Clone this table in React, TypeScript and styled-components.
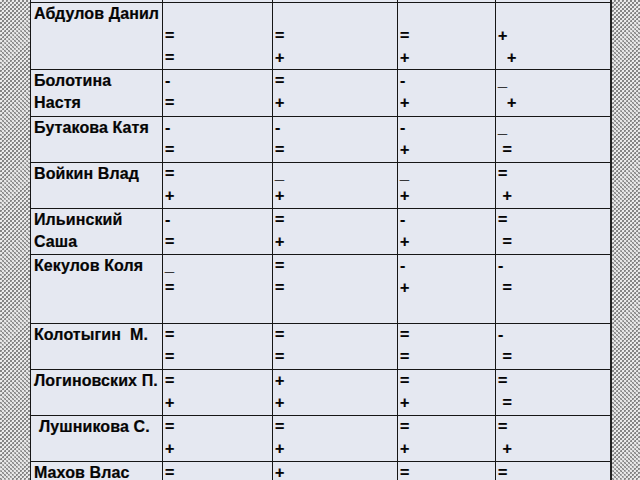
import React from "react";
import styled, { createGlobalStyle } from "styled-components";

const Global = createGlobalStyle`
  html, body { margin: 0; padding: 0; background: #ffffff; }
  body { width: 640px; height: 480px; overflow: hidden; }
`;

const Page = styled.div`
  display: flex;
  width: 640px;
  height: 480px;
  overflow: hidden;
`;

const Hatch = styled.div`
  flex: 0 0 30px;
  height: 100%;
  background-color: #c4c4c4;
  background-image:
    repeating-linear-gradient(135deg, rgba(255,255,255,0.3) 0 1px, transparent 1px 3px),
    repeating-conic-gradient(#858585 0 25%, #e6e6e6 0 50%);
  background-size: auto, 4px 4px;
`;

const Sheet = styled.table`
  flex: 0 0 580px;
  width: 580px;
  table-layout: fixed;
  border-collapse: collapse;
  align-self: flex-start;
  background: #e5e8f1;
  font-family: "Liberation Sans", Arial, sans-serif;
  font-weight: bold;
  font-size: 16px;
  letter-spacing: 0.1px;
  color: #050505;
  -webkit-text-stroke: 0.2px #050505;
`;

const Row = styled.tr<{ $h: number }>`
  height: ${(p) => p.$h}px;
`;

const Cell = styled.td<{ $indent?: number }>`
  border: 1px solid #161616;
  padding: 0 0 0 ${(p) => p.$indent ?? 2}px;
  vertical-align: top;
  overflow: hidden;
  &:last-child { border-right: 2px solid #222; }
`;

const ClipCell = styled.td`
  border-left: 1px solid #161616;
  border-right: 1px solid #161616;
  border-bottom: 1px solid #161616;
  padding: 0;
  height: 2px;
  &:last-child { border-right: 2px solid #222; }
`;

const Line = styled.div`
  height: 22px;
  line-height: 22px;
  white-space: pre;
`;

type R = { name: string[]; h: number; indent?: number; cells: string[][] };

const rows: R[] = [
  {
    name: ["Абдулов Данил"],
    h: 67,
    cells: [
      ["", "=", "="],
      ["", "=", "+"],
      ["", "=", "+"],
      ["", "+", "  +"],
    ],
  },
  {
    name: ["Болотина", "Настя"],
    h: 47,
    cells: [
      ["-", "="],
      ["=", "+"],
      ["-", "+"],
      ["_", "  +"],
    ],
  },
  {
    name: ["Бутакова Катя"],
    h: 46,
    cells: [
      ["-", "="],
      ["-", "="],
      ["-", "+"],
      ["_", " ="],
    ],
  },
  {
    name: ["Войкин Влад"],
    h: 46,
    cells: [
      ["=", "+"],
      ["_", "+"],
      ["_", "+"],
      ["=", " +"],
    ],
  },
  {
    name: ["Ильинский", "Саша"],
    h: 46,
    cells: [
      ["-", "="],
      ["=", "+"],
      ["-", "+"],
      ["=", " ="],
    ],
  },
  {
    name: ["Кекулов Коля"],
    h: 69,
    cells: [
      ["_", "="],
      ["=", "="],
      ["-", "+"],
      ["-", " ="],
    ],
  },
  {
    name: ["Колотыгин  М."],
    h: 46,
    cells: [
      ["=", "="],
      ["=", "="],
      ["=", "="],
      ["-", " ="],
    ],
  },
  {
    name: ["Логиновских П."],
    h: 46,
    cells: [
      ["=", "+"],
      ["+", "+"],
      ["=", "+"],
      ["=", " ="],
    ],
  },
  {
    name: ["Лушникова С."],
    h: 46,
    indent: 8,
    cells: [
      ["=", "+"],
      ["=", "+"],
      ["=", "+"],
      ["=", " +"],
    ],
  },
  {
    name: ["Махов Влас"],
    h: 46,
    cells: [["="], ["+"], ["="], ["="]],
  },
];

export default function App() {
  return (
    <>
      <Global />
      <Page>
        <Hatch />
        <Sheet>
          <colgroup>
            <col style={{ width: 132 }} />
            <col style={{ width: 110 }} />
            <col style={{ width: 125 }} />
            <col style={{ width: 98 }} />
            <col style={{ width: 115 }} />
          </colgroup>
          <tbody>
            <Row $h={2}>
              <ClipCell />
              <ClipCell />
              <ClipCell />
              <ClipCell />
              <ClipCell />
            </Row>
            {rows.map((r, i) => (
              <Row key={i} $h={r.h}>
                <Cell $indent={r.indent ?? 3}>
                  {r.name.map((n, j) => (
                    <Line key={j}>{n}</Line>
                  ))}
                </Cell>
                {r.cells.map((c, k) => (
                  <Cell key={k}>
                    {c.map((v, j) => (
                      <Line key={j}>{v}</Line>
                    ))}
                  </Cell>
                ))}
              </Row>
            ))}
          </tbody>
        </Sheet>
        <Hatch />
      </Page>
    </>
  );
}
